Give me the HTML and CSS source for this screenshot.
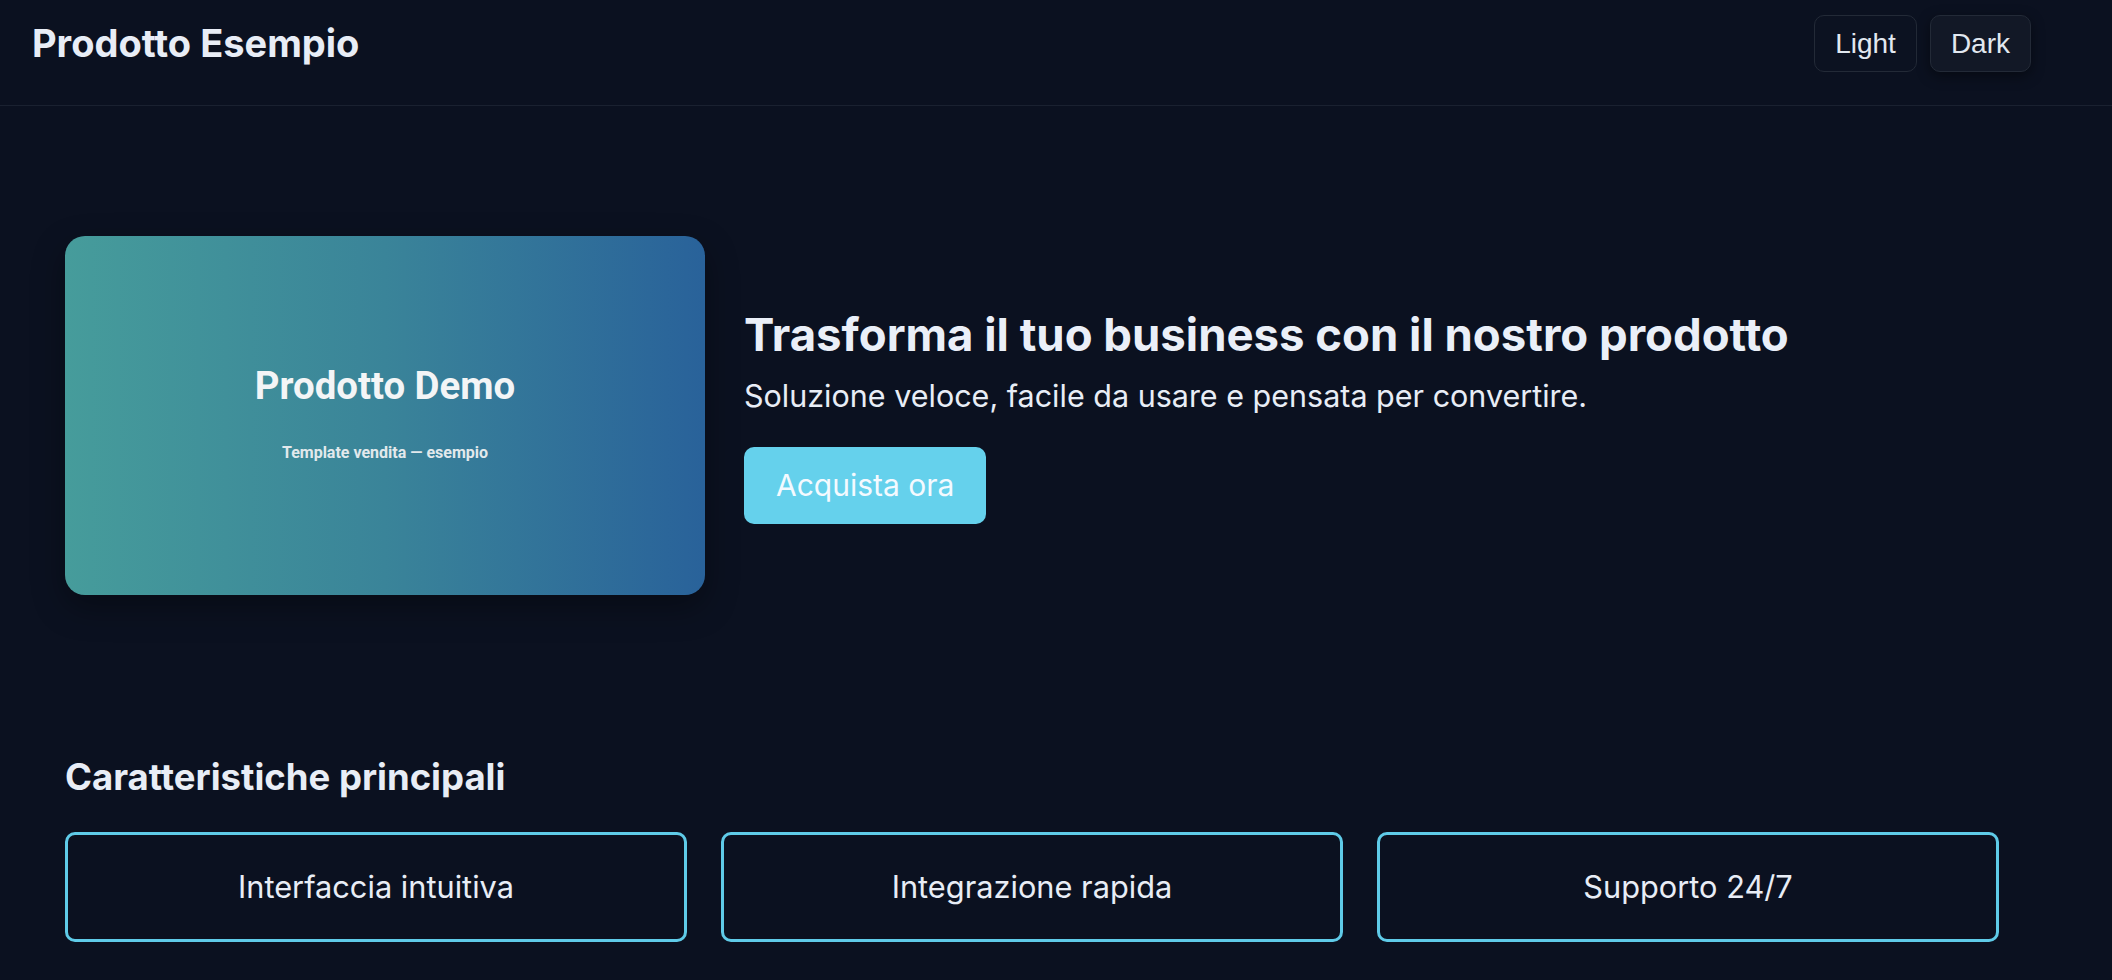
FILE: index.html
```html
<!DOCTYPE html>
<html lang="it">
<head>
<meta charset="utf-8">
<title>Prodotto Esempio</title>
<link rel="stylesheet" href="styles.css">
</head>
<body>
<header class="topbar">
  <div class="brand">Prodotto Esempio</div>
  <div class="theme-switch">
    <button class="theme-btn">Light</button>
    <button class="theme-btn active">Dark</button>
  </div>
</header>
<main class="page">
  <section class="hero">
    <div class="hero-visual">
      <div class="visual-title">Prodotto Demo</div>
      <div class="visual-sub">Template vendita — esempio</div>
    </div>
    <div class="hero-copy">
      <h1 class="hero-title">Trasforma il tuo business con il nostro prodotto</h1>
      <p class="hero-lead">Soluzione veloce, facile da usare e pensata per convertire.</p>
      <button class="cta">Acquista ora</button>
    </div>
  </section>
  <section class="features">
    <h2 class="features-title">Caratteristiche principali</h2>
    <div class="feature-grid">
      <div class="feature">Interfaccia intuitiva</div>
      <div class="feature">Integrazione rapida</div>
      <div class="feature">Supporto 24/7</div>
    </div>
  </section>
</main>
</body>
</html>
```
FILE: styles.css
```css
* { box-sizing: border-box; }
html, body { margin: 0; padding: 0; }
body {
  background: #0b1120;
  color: #e8edf6;
  font-family: Inter, "Noto Sans", sans-serif;
  height: 980px;
  overflow: hidden;
}
.topbar {
  display: flex;
  justify-content: space-between;
  align-items: flex-start;
  height: 106px;
  padding: 15px 81px 0 32px;
  border-bottom: 1px solid #1a2130;
}
.brand {
  font-size: 38px;
  font-weight: 700;
  line-height: 44px;
  margin-top: 6px;
  color: #e8edf6;
}
.theme-switch {
  display: flex;
  gap: 13px;
}
.theme-btn {
  font-family: "Liberation Sans", Arial, sans-serif;
  font-size: 28px;
  line-height: 33px;
  padding: 11px 20px;
  color: #e2e8f0;
  background: #0c1221;
  border: 1px solid #232a37;
  border-radius: 10px;
}
.theme-btn.active {
  background: #121826;
  box-shadow: 0 4px 14px rgba(0, 0, 0, 0.45);
}
.page {
  padding-left: 65px;
  width: 1999px;
}
.hero {
  display: flex;
  align-items: center;
  gap: 39px;
  padding-top: 130px;
}
.hero-visual {
  flex: none;
  width: 640px;
  height: 359px;
  border-radius: 20px;
  background: linear-gradient(90deg, #469c9b 0%, #3a8499 50%, #29629a 100%);
  box-shadow: 0 12px 32px rgba(0, 0, 0, 0.35);
  display: flex;
  flex-direction: column;
  align-items: center;
  justify-content: center;
  gap: 34px;
  padding-bottom: 8px;
  font-family: Roboto, "Liberation Sans", sans-serif;
  font-weight: 700;
}
.visual-title {
  font-size: 38.4px;
  line-height: 47px;
  color: #f3f5f6;
}
.visual-sub {
  font-size: 16px;
  line-height: 19px;
  color: #e2e9ec;
}
.hero-copy {
  display: flex;
  flex-direction: column;
  align-items: flex-start;
}
.hero-title {
  margin: 0 0 13px;
  font-size: 45.5px;
  line-height: 55px;
  font-weight: 700;
  color: #eaeff8;
}
.hero-lead {
  margin: 0 0 30px;
  font-size: 30.5px;
  line-height: 42px;
  color: #e8edf6;
}
.cta {
  font-family: Inter, "Noto Sans", sans-serif;
  font-size: 30px;
  line-height: 37px;
  padding: 20px 32px;
  color: #f4faff;
  background: #65d1ec;
  border: none;
  border-radius: 10px;
}
.features {
  padding-top: 161px;
}
.features-title {
  margin: 0 0 33px;
  font-size: 36.5px;
  line-height: 43px;
  font-weight: 700;
  color: #e8edf6;
}
.feature-grid {
  display: grid;
  grid-template-columns: repeat(3, 1fr);
  gap: 34px;
}
.feature {
  border: 3px solid #5fcbe8;
  border-radius: 10px;
  padding: 33px 16px 34px;
  line-height: 37px;
  font-size: 30.75px;
  text-align: center;
  color: #e8edf6;
}
```
